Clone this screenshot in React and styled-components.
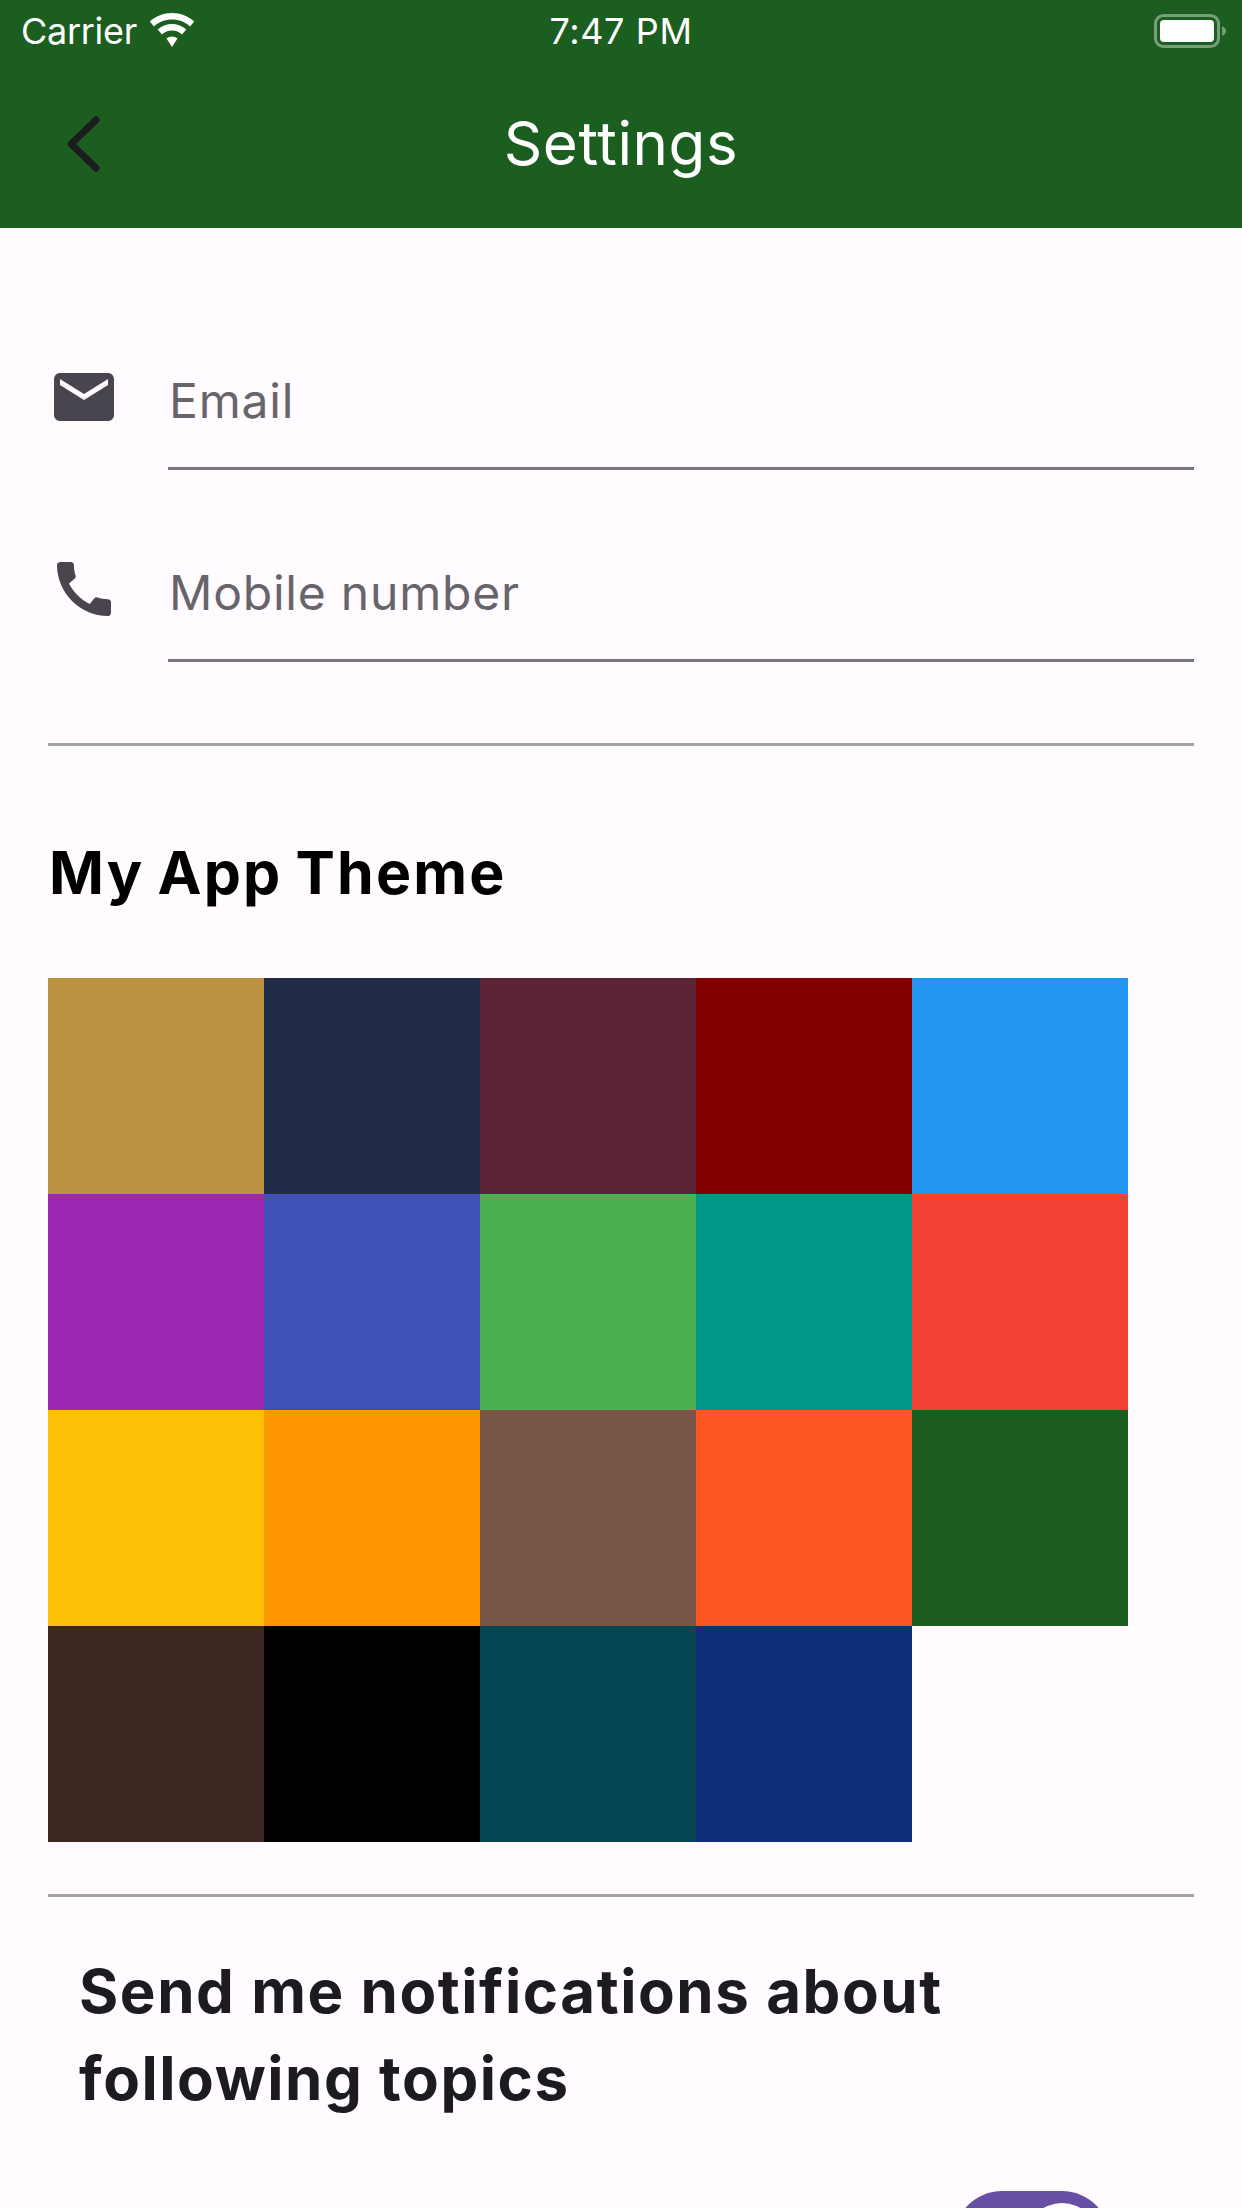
import React from "react";
import styled, { createGlobalStyle } from "styled-components";

const Global = createGlobalStyle`
  html, body { margin: 0; padding: 0; background: #fffbfe; }
  body { font-family: Inter, "Noto Sans", sans-serif; }
`;
const Page = styled.div`
  width: 1242px; height: 2208px; overflow: hidden; background: #fffbfe; display: flex; flex-direction: column;
`;
const Header = styled.header`
  height: 228px; background: #1b5e20; color: #fff; display: flex; flex-direction: column; flex: none;
`;
const StatusBar = styled.div`
  height: 62px; padding: 0 16px; display: grid; grid-template-columns: 1fr auto 1fr; align-items: center;
  font-size: 36px; line-height: 60px;
`;
const Carrier = styled.div`
  display: flex; align-items: center; gap: 12px; margin-left: 5px; letter-spacing: -0.3px;
`;
const Clock = styled.span`
  letter-spacing: 0.6px;
`;
const Battery = styled.div`
  justify-self: end; display: flex; align-items: center;
`;
const AppBar = styled.div`
  flex: 1; position: relative; display: flex; align-items: center; justify-content: center; padding-bottom: 4px;
`;
const BackIcon = styled.svg`
  position: absolute; left: 64px; top: 50%; transform: translateY(-50%);
`;
const Title = styled.h1`
  margin: 0; font-size: 60px; font-weight: 400; letter-spacing: 0.6px;
`;
const Fields = styled.section`
  display: flex; flex-direction: column; gap: 60px; padding: 110px 48px 0 48px;
`;
const Field = styled.div`
  display: flex; align-items: stretch; height: 132px;
`;
const FieldIcon = styled.svg`
  width: 72px; height: 72px; flex: none; fill: #49454f; margin-top: ${p => p.$top}px;
`;
const FieldInput = styled.div`
  flex: 1; margin-left: 48px; border-bottom: 3px solid #79747e; color: #67646a; font-size: 48px;
  padding: 33px 0 0 1px; letter-spacing: 0.8px; line-height: 60px;
`;
const Divider = styled.hr`
  margin: ${p => p.$top}px 48px 0; border: 0; height: 3px; background: #a5a4a6; flex: none;
`;
const ThemeHeading = styled.h2`
  margin: 94px 0 0 49px; font-size: 59px; font-weight: 700; line-height: 66px; color: #000;
  letter-spacing: 2.15px; word-spacing: -3px;
`;
const Swatches = styled.div`
  display: grid; grid-template-columns: repeat(5, 216px); grid-auto-rows: 216px; margin: 72px 0 0 48px;
`;
const Swatch = styled.div`
  background: ${p => p.$color};
`;
const NotifyHeading = styled.h2`
  margin: 51px 0 0 79px; width: 1000px; font-size: 60px; font-weight: 700; line-height: 87px; color: #1c1b1f; letter-spacing: 1.55px;
`;
const SwitchRow = styled.div`
  display: flex; justify-content: flex-end; padding: 69px 132px 0 0;
`;
const SwitchTrack = styled.div`
  width: 156px; height: 96px; flex: none; border-radius: 48px; background: #6750a4; position: relative;
`;
const SwitchThumb = styled.div`
  position: absolute; top: 12px; right: 12px; width: 72px; height: 72px; border-radius: 50%; background: #fff;
`;

const colors = [
  "#bb9240", "#212b46", "#5b2336", "#800000", "#2196f3",
  "#9c27b0", "#3f51b5", "#4caf50", "#009688", "#f44336",
  "#ffc107", "#ff9800", "#795548", "#ff5722", "#1b5e20",
  "#3e2723", "#000000", "#034652", "#0f2f78",
];

export default function App() {
  return (
    <Page>
      <Global />
      <Header>
        <StatusBar>
          <Carrier>
            <span>Carrier</span>
            <svg width="46" height="36" viewBox="0 0 46 36" fill="#fff">
              <path d="M23 0C14.500 0 6.700 3.200 0.800 8.500L5 13.500C9.800 9.200 16.100 6.600 23 6.600S36.200 9.200 41 13.500L45.200 8.500C39.300 3.200 31.500 0 23 0Z" />
              <path d="M23 11C17.500 11 12.500 13 8.700 16.500L13 21.500C15.700 19.100 19.200 17.600 23 17.600S30.300 19.100 33 21.500L37.300 16.500C33.500 13 28.500 11 23 11Z" />
              <path d="M23 23.500C20.900 23.500 19 24.300 17.500 25.500L23 34L28.500 25.500C27 24.300 25.100 23.500 23 23.500Z" />
            </svg>
          </Carrier>
          <Clock>7:47 PM</Clock>
          <Battery>
            <svg width="72" height="34" viewBox="0 0 72 34">
              <rect x="1.500" y="1.500" width="63" height="31" rx="8" fill="none" stroke="#fff" strokeOpacity="0.4" strokeWidth="3" />
              <rect x="6" y="6" width="54" height="22" rx="4" fill="#fff" />
              <path d="M68 12C70.500 13 72 15 72 17S70.500 21 68 22Z" fill="#fff" fillOpacity="0.4" />
            </svg>
          </Battery>
        </StatusBar>
        <AppBar>
          <BackIcon width="40" height="64" viewBox="0 0 40 64" fill="none" stroke="#1c1b1f" strokeWidth="7" strokeLinecap="round" strokeLinejoin="round">
            <path d="M32 7L7 31L32 55" />
          </BackIcon>
          <Title>Settings</Title>
        </AppBar>
      </Header>
      <Fields>
        <Field>
          <FieldIcon $top={23} viewBox="0 0 24 24">
            <path d="M20 4H4c-1.100 0-1.990.900-1.990 2L2 18c0 1.100.900 2 2 2h16c1.100 0 2-.900 2-2V6c0-1.100-.900-2-2-2zm0 4l-8 5-8-5V6l8 5 8-5v2z" />
          </FieldIcon>
          <FieldInput>Email</FieldInput>
        </Field>
        <Field>
          <FieldIcon $top={23} viewBox="0 0 24 24">
            <path d="M20.010 15.380c-1.230 0-2.420-.200-3.530-.560-.350-.120-.740-.030-1.010.240l-1.570 1.970c-2.830-1.350-5.480-3.900-6.890-6.830l1.950-1.660c.270-.280.350-.670.240-1.020-.370-1.110-.560-2.300-.560-3.530 0-.540-.450-.990-.990-.990H4.190C3.650 3 3 3.240 3 3.990 3 13.280 10.730 21 20.010 21c.710 0 .990-.630.990-1.180v-3.450c0-.540-.450-.990-.990-.990z" />
          </FieldIcon>
          <FieldInput>Mobile number</FieldInput>
        </Field>
      </Fields>
      <Divider $top={81} />
      <ThemeHeading>My App Theme</ThemeHeading>
      <Swatches>
        {colors.map(c => <Swatch key={c} $color={c} />)}
      </Swatches>
      <Divider $top={52} />
      <NotifyHeading>Send me notifications about following topics</NotifyHeading>
      <SwitchRow>
        <SwitchTrack>
          <SwitchThumb />
        </SwitchTrack>
      </SwitchRow>
    </Page>
  );
}
